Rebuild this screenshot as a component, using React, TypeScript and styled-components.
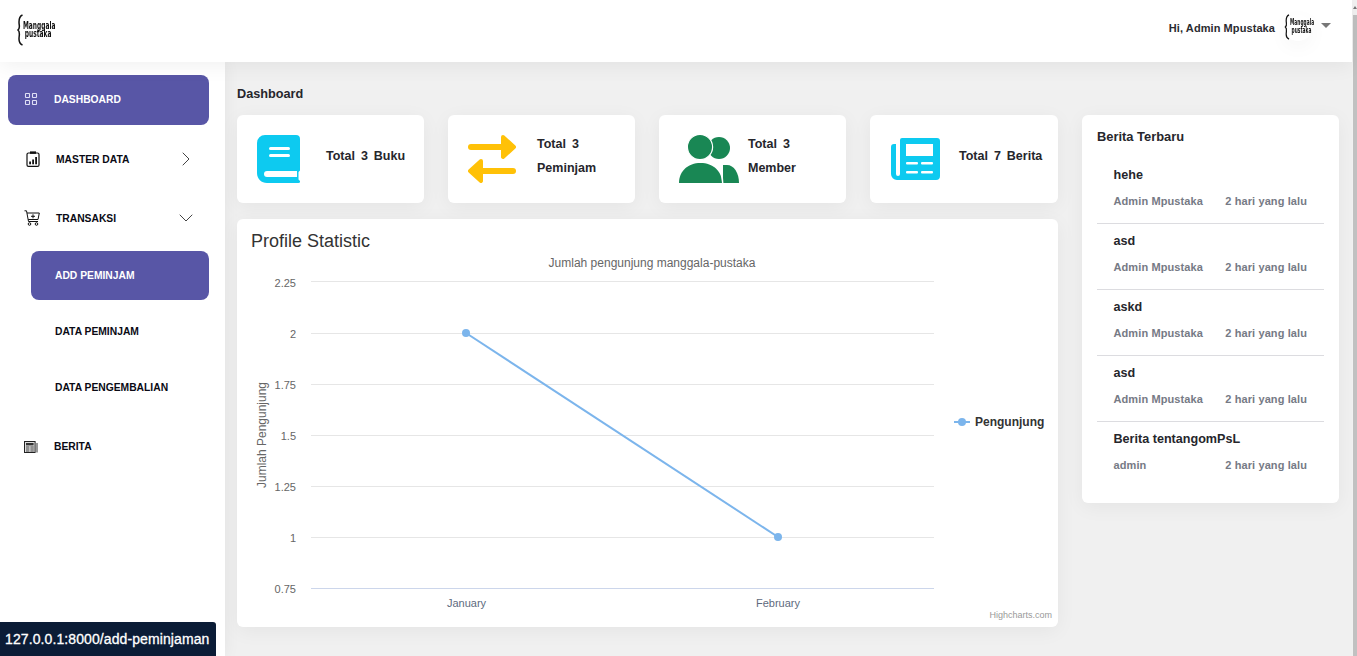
import React from 'react';
import styled, { createGlobalStyle } from 'styled-components';
import { ChevronDown, ChevronRight } from 'lucide-react';

const GlobalStyle = createGlobalStyle`
  html, body {
    margin: 0;
    height: 100%;
    overflow: hidden;
    font-family: 'Liberation Sans', Arial, sans-serif;
    background: #f0f0f0;
  }
`;

const Viewport = styled.div`
  width: 1357px;
  height: 656px;
  display: flex;
  overflow: hidden;
`;

const Page = styled.div`
  width: 1352px;
  display: flex;
  flex-direction: column;
`;

const Scrollbar = styled.div`
  width: 5px;
  background: #f1f1f1;
  padding: 15px 0 0 1px;
  box-sizing: border-box;
  display: flex;
  position: relative;

  &::before {
    content: '';
    flex: 1;
    background: #c1c1c1;
  }

  &::after {
    content: '';
    position: absolute;
    top: 6px;
    left: 1px;
    border-left: 2px solid transparent;
    border-right: 2px solid transparent;
    border-bottom: 3px solid #777;
  }
`;

const Header = styled.header`
  height: 62px;
  flex: none;
  background: #fff;
  box-shadow: 0 4px 20px rgba(0, 0, 0, 0.06);
  display: flex;
  align-items: center;
  justify-content: space-between;
  padding: 0 21px 0 17px;
  position: relative;
  z-index: 2;
`;

const LogoWrap = styled.div<{ $small?: boolean }>`
  display: flex;
  align-items: center;
  height: ${({ $small }) => ($small ? 26 : 32)}px;
  color: #111;
  transform: translateY(-1px);
  ${({ $small }) => $small && 'filter: blur(0.6px);'}
`;

const LogoText = styled.div<{ $small?: boolean }>`
  font-family: 'DejaVu Sans', sans-serif;
  font-size: ${({ $small }) => ($small ? 8 : 10)}px;
  line-height: ${({ $small }) => ($small ? 8 : 8.5)}px;
  font-weight: 700;
  transform: scaleX(${({ $small }) => ($small ? 0.54 : 0.59)});
  transform-origin: left center;
  width: ${({ $small }) => ($small ? 22 : 31)}px;
  white-space: nowrap;

  span {
    display: block;
    margin-left: 3px;
  }
`;

const UserArea = styled.div`
  display: flex;
  align-items: center;
  font-size: 11px;
  font-weight: 700;
  letter-spacing: 0.08px;
  color: #2b2b30;
  transform: translateY(-3px);
`;

const UserName = styled.span`
  margin-right: 9px;
`;

const Avatar = styled.span`
  display: flex;
  border-radius: 50%;
  background: #fff;
  box-shadow: 0 6px 20px rgba(0, 0, 0, 0.04);
`;

const Caret = styled.span`
  width: 0;
  height: 0;
  margin-left: 9px;
  margin-top: -5px;
  border-left: 5.5px solid transparent;
  border-right: 5.5px solid transparent;
  border-top: 5px solid #777;
`;

const Body = styled.div`
  flex: 1;
  min-height: 0;
  display: flex;
`;

const Sidebar = styled.aside`
  width: 225px;
  flex: none;
  background: #fff;
  padding: 13px 16px 0 8px;
  box-sizing: border-box;
  display: flex;
  flex-direction: column;
  box-shadow: 0 0 16px rgba(0, 0, 0, 0.06);
  position: relative;
  z-index: 1;
`;

const NavItem = styled.div<{ $active?: boolean; $height: number; $indent: number; $lift?: boolean }>`
  height: ${({ $height }) => $height}px;
  flex: none;
  display: flex;
  align-items: center;
  padding-left: ${({ $indent }) => $indent}px;
  padding-right: 11px;
  padding-bottom: ${({ $lift }) => ($lift ? 2 : 0)}px;
  font-size: 10.3px;
  font-weight: 700;
  color: ${({ $active }) => ($active ? '#fff' : '#0a0a14')};
  background: ${({ $active }) => ($active ? '#5856a6' : 'transparent')};
  border-radius: 8px;
  box-sizing: border-box;
`;

const NavIcon = styled.span<{ $width: number }>`
  width: ${({ $width }) => $width}px;
  flex: none;
  display: flex;
  align-items: center;
`;

const NavLabel = styled.span`
  flex: 1;
`;

const SubNav = styled.div`
  margin: 8px 0 0 23px;
  display: flex;
  flex-direction: column;
`;

const Main = styled.main`
  flex: 1;
  min-width: 0;
  padding: 24px 13px 0 12px;
  display: flex;
  flex-direction: column;
`;

const PageTitle = styled.h1`
  margin: 0 0 13px;
  font-size: 12.7px;
  line-height: 16px;
  font-weight: 700;
  color: #26262c;
`;

const Columns = styled.div`
  display: flex;
  gap: 24px;
  align-items: flex-start;
`;

const LeftColumn = styled.div`
  width: 821px;
  display: flex;
  flex-direction: column;
  gap: 16px;
`;

const StatRow = styled.div`
  display: grid;
  grid-template-columns: 187px 187px 187px 188px;
  gap: 24px;
`;

const Card = styled.div`
  background: #fff;
  border-radius: 6px;
  box-shadow: 0 4px 20px rgba(0, 0, 0, 0.05);
`;

const StatCard = styled(Card)`
  height: 88px;
  display: grid;
  grid-template-columns: 89px 1fr;
  align-items: center;
`;

const StatIcon = styled.div<{ $left: number }>`
  padding-left: ${({ $left }) => $left}px;
  display: flex;
  align-items: center;
`;

const StatText = styled.div`
  font-size: 12.5px;
  line-height: 24px;
  font-weight: 700;
  word-spacing: 2.5px;
  color: #26262c;
  white-space: nowrap;
  padding-bottom: 6px;
`;

const ChartCard = styled(Card)`
  height: 408px;
  position: relative;
`;

const ChartTitle = styled.div`
  position: absolute;
  left: 14px;
  top: 11px;
  font-size: 18px;
  line-height: 22px;
  color: #333;
`;

const ChartSvg = styled.svg`
  display: block;
  font-family: 'Liberation Sans', Arial, sans-serif;
`;

const NewsCard = styled(Card)`
  width: 257px;
  height: 388px;
  padding: 13px 15px 0;
  box-sizing: border-box;
`;

const NewsTitle = styled.div`
  font-size: 12.9px;
  line-height: 17px;
  font-weight: 700;
  color: #26262c;
  margin-bottom: 13px;
`;

const NewsItem = styled.div<{ $last?: boolean }>`
  height: 66px;
  box-sizing: border-box;
  padding: 9px 17px 0 16.500px;
  border-bottom: ${({ $last }) => ($last ? 'none' : '1px solid #dcdce0')};
`;

const NewsHead = styled.div`
  font-size: 12.6px;
  line-height: 17px;
  font-weight: 700;
  color: #26262c;
  margin-bottom: 10px;
`;

const NewsMeta = styled.div`
  display: flex;
  justify-content: space-between;
  font-size: 11px;
  line-height: 14px;
  font-weight: 700;
  letter-spacing: 0.1px;
  color: #767a85;
`;

const StatusBar = styled.div`
  position: fixed;
  left: 0;
  bottom: 0;
  width: 216px;
  height: 34px;
  box-sizing: border-box;
  padding-left: 5px;
  display: flex;
  align-items: center;
  background: #0b1c36;
  border-top-right-radius: 3px;
  color: #fff;
  font-size: 14px;
  letter-spacing: 0.1px;
  -webkit-text-stroke: 0.3px #fff;
  white-space: nowrap;
  z-index: 5;
`;

const Logo = ({ small }: { small?: boolean }) => (
  <LogoWrap $small={small}>
    <svg width="6" height={small ? 26 : 32} viewBox="0 0 6 32" fill="none" stroke="#111" strokeWidth="1.500">
      <path d="M5.500 1C3 2 2 4 2 8c0 4 1.500 6-1 8 2.500 2 1 5 1 9 0 3 1 5 3.500 6" />
    </svg>
    <LogoText $small={small}>
      Manggala
      <span>pustaka</span>
    </LogoText>
  </LogoWrap>
);

const GridIcon = () => (
  <svg width="14" height="14" viewBox="0 0 14 14" fill="none" stroke="#dfe0f5" strokeWidth="1.100">
    <rect x="1.500" y="1.500" width="4" height="4" rx="0.500" />
    <rect x="8.500" y="1.500" width="4" height="4" rx="0.500" />
    <rect x="1.500" y="8.500" width="4" height="4" rx="0.500" />
    <rect x="8.500" y="8.500" width="4" height="4" rx="0.500" />
  </svg>
);

const ClipboardIcon = () => (
  <svg width="14" height="16" viewBox="0 0 14 16" fill="none">
    <rect x="1" y="2" width="12" height="13.400" rx="1.500" stroke="#111" strokeWidth="1.200" />
    <rect x="4" y="0.400" width="6" height="2.400" fill="#111" />
    <rect x="3.200" y="10.500" width="1.800" height="2.800" fill="#111" />
    <rect x="6.200" y="8.500" width="1.800" height="4.800" fill="#111" />
    <rect x="9.200" y="6" width="1.800" height="7.300" fill="#111" />
  </svg>
);

const CartIcon = () => (
  <svg width="16" height="16" viewBox="0 0 16 16" fill="none" stroke="#111" strokeWidth="1">
    <path d="M0.500 0.800H2.500L4.500 11.500H14" />
    <path d="M3 3H15.300L14 9.500H4.200" />
    <path d="M9 4.300V8.300M7 6.300H11" />
    <circle cx="5.500" cy="14" r="1.300" />
    <circle cx="12.500" cy="14" r="1.300" />
  </svg>
);

const NewsSmallIcon = () => (
  <svg width="14" height="12" viewBox="0 0 14 12">
    <rect x="0.500" y="0.500" width="10.600" height="11" fill="#ddd" stroke="#222" />
    <rect x="2" y="2" width="7.600" height="2.400" fill="#333" />
    <path d="M2 6h3.400M2 8h3.400M2 10h3.400M6.400 6h3.400M6.400 8h3.400M6.400 10h3.400" stroke="#444" />
    <path d="M13 2v9.500" stroke="#333" />
  </svg>
);

const BookIcon = () => (
  <svg width="43" height="48" viewBox="0 0 43 48">
    <path
      d="M8 0h31a4 4 0 0 1 4 4v31.500l-1.500 1.500V44.500l1.500 1.500c.4 1-.2 2-1.600 2H10C4.500 48 0 44 0 38V8a8 8 0 0 1 8-8z"
      fill="#0dcaf0"
    />
    <path d="M10 36h30v6H10a3 3 0 0 1 0-6z" fill="#fff" />
    <rect x="12" y="12" width="21" height="3" rx="1.500" fill="#fff" />
    <rect x="12" y="19" width="21" height="3" rx="1.500" fill="#fff" />
  </svg>
);

const SwapIcon = () => (
  <svg width="48" height="48" viewBox="0 0 48 48" fill="#ffc107" stroke="#ffc107" strokeLinejoin="round" strokeLinecap="round">
    <path d="M3 12H36" fill="none" strokeWidth="6" />
    <polygon points="35,2 46,12 35,22" strokeWidth="4" />
    <path d="M12 36H45" fill="none" strokeWidth="6" />
    <polygon points="13,26 2,36 13,46" strokeWidth="4" />
  </svg>
);

const PeopleIcon = () => (
  <svg width="60" height="48" viewBox="0 0 60 48" fill="#198754">
    <circle cx="40" cy="13" r="11" />
    <path d="M44 30h4c7 0 12 8 12 18H44z" />
    <circle cx="21" cy="12" r="12.600" stroke="#fff" strokeWidth="1.200" />
    <path d="M0 48C0 36 9 28 21.500 28S43 36 43 48z" />
    <path d="M43.700 48C43.700 40 41 33 37 29" fill="none" stroke="#fff" strokeWidth="1.400" />
  </svg>
);

const PaperIcon = () => (
  <svg width="49" height="42" viewBox="0 0 49 42">
    <path d="M11 0h35a3 3 0 0 1 3 3v35a4 4 0 0 1-4 4H6a6 6 0 0 1-6-6V9a3 3 0 0 1 3-3h2v30a2 2 0 0 0 4 0V2a2 2 0 0 1 2-2z" fill="#0dcaf0" />
    <rect x="15" y="6" width="27" height="12" fill="#fff" />
    <rect x="15" y="24" width="12" height="2.500" rx="1" fill="#fff" />
    <rect x="30" y="24" width="12" height="2.500" rx="1" fill="#fff" />
    <rect x="15" y="33" width="12" height="2.500" rx="1" fill="#fff" />
    <rect x="30" y="33" width="12" height="2.500" rx="1" fill="#fff" />
  </svg>
);

const CHART_LEFT = 74;
const CHART_RIGHT = 697;
const ticks = [
  { label: '2.25', y: 62.5, textY: 68 },
  { label: '2', y: 114.5, textY: 119 },
  { label: '1.75', y: 165.5, textY: 170 },
  { label: '1.5', y: 216.5, textY: 221 },
  { label: '1.25', y: 267.5, textY: 272 },
  { label: '1', y: 318.5, textY: 323 },
];

const LineChart = () => (
  <ChartSvg width="821" height="408" viewBox="0 0 821 408">
    <text x="415" y="48" fontSize="12" fill="#666" textAnchor="middle">
      Jumlah pengunjung manggala-pustaka
    </text>
    {ticks.map((t) => (
      <g key={t.label}>
        <line x1={CHART_LEFT} x2={CHART_RIGHT} y1={t.y} y2={t.y} stroke="#e6e6e6" />
        <text x="59" y={t.textY} fontSize="11" fill="#666" textAnchor="end">
          {t.label}
        </text>
      </g>
    ))}
    <line x1={CHART_LEFT} x2={CHART_RIGHT} y1="369.500" y2="369.500" stroke="#ccd6eb" />
    <text x="59" y="374" fontSize="11" fill="#666" textAnchor="end">
      0.75
    </text>
    <text x="229.500" y="388" fontSize="11" fill="#5e6a7d" textAnchor="middle">
      January
    </text>
    <text x="541" y="388" fontSize="11" fill="#5e6a7d" textAnchor="middle">
      February
    </text>
    <text x="0" y="0" fontSize="12" fill="#666" textAnchor="middle" transform="translate(29 216) rotate(-90)">
      Jumlah Pengunjung
    </text>
    <path d="M229 114L541 318" stroke="#7cb5ec" strokeWidth="2" fill="none" />
    <circle cx="229" cy="114" r="4" fill="#7cb5ec" />
    <circle cx="541" cy="318" r="4" fill="#7cb5ec" />
    <line x1="717" x2="733" y1="203" y2="203" stroke="#7cb5ec" strokeWidth="2" />
    <circle cx="725" cy="203" r="4" fill="#7cb5ec" />
    <text x="738" y="207" fontSize="12" fontWeight="700" fill="#333">
      Pengunjung
    </text>
    <text x="815" y="399" fontSize="9" fill="#999" textAnchor="end">
      Highcharts.com
    </text>
  </ChartSvg>
);

const news = [
  { title: 'hehe', author: 'Admin Mpustaka' },
  { title: 'asd', author: 'Admin Mpustaka' },
  { title: 'askd', author: 'Admin Mpustaka' },
  { title: 'asd', author: 'Admin Mpustaka' },
  { title: 'Berita tentangomPsL', author: 'admin' },
];

const App = (): JSX.Element => (
  <Viewport>
    <GlobalStyle />
    <Page>
      <Header>
        <Logo />
        <UserArea>
          <UserName>Hi, Admin Mpustaka</UserName>
          <Avatar>
            <Logo small />
          </Avatar>
          <Caret />
        </UserArea>
      </Header>
      <Body>
        <Sidebar>
          <NavItem $active $lift $height={50} $indent={16}>
            <NavIcon $width={30}>
              <GridIcon />
            </NavIcon>
            <NavLabel>DASHBOARD</NavLabel>
          </NavItem>
          <NavItem $height={68} $indent={18}>
            <NavIcon $width={30}>
              <ClipboardIcon />
            </NavIcon>
            <NavLabel>MASTER DATA</NavLabel>
            <ChevronRight size={24} strokeWidth={1} color="#444" />
          </NavItem>
          <NavItem $height={50} $indent={16}>
            <NavIcon $width={32}>
              <CartIcon />
            </NavIcon>
            <NavLabel>TRANSAKSI</NavLabel>
            <ChevronDown size={24} strokeWidth={1} color="#444" />
          </NavItem>
          <SubNav>
            <NavItem $active $height={49} $indent={24}>
              <NavLabel>ADD PEMINJAM</NavLabel>
            </NavItem>
            <NavItem $height={63} $indent={24}>
              <NavLabel>DATA PEMINJAM</NavLabel>
            </NavItem>
            <NavItem $height={49} $indent={24}>
              <NavLabel>DATA PENGEMBALIAN</NavLabel>
            </NavItem>
          </SubNav>
          <NavItem $height={69} $indent={16}>
            <NavIcon $width={30}>
              <NewsSmallIcon />
            </NavIcon>
            <NavLabel>BERITA</NavLabel>
          </NavItem>
        </Sidebar>
        <Main>
          <PageTitle>Dashboard</PageTitle>
          <Columns>
            <LeftColumn>
              <StatRow>
                <StatCard>
                  <StatIcon $left={20}>
                    <BookIcon />
                  </StatIcon>
                  <StatText>Total 3 Buku</StatText>
                </StatCard>
                <StatCard>
                  <StatIcon $left={20}>
                    <SwapIcon />
                  </StatIcon>
                  <StatText>
                    Total 3
                    <br />
                    Peminjam
                  </StatText>
                </StatCard>
                <StatCard>
                  <StatIcon $left={20}>
                    <PeopleIcon />
                  </StatIcon>
                  <StatText>
                    Total 3
                    <br />
                    Member
                  </StatText>
                </StatCard>
                <StatCard>
                  <StatIcon $left={21}>
                    <PaperIcon />
                  </StatIcon>
                  <StatText>Total 7 Berita</StatText>
                </StatCard>
              </StatRow>
              <ChartCard>
                <ChartTitle>Profile Statistic</ChartTitle>
                <LineChart />
              </ChartCard>
            </LeftColumn>
            <NewsCard>
              <NewsTitle>Berita Terbaru</NewsTitle>
              {news.map((n, i) => (
                <NewsItem key={i} $last={i === news.length - 1}>
                  <NewsHead>{n.title}</NewsHead>
                  <NewsMeta>
                    <span>{n.author}</span>
                    <span>2 hari yang lalu</span>
                  </NewsMeta>
                </NewsItem>
              ))}
            </NewsCard>
          </Columns>
        </Main>
      </Body>
    </Page>
    <Scrollbar />
    <StatusBar>
      <span>127.0.0.1:8000/add-peminjaman</span>
    </StatusBar>
  </Viewport>
);

export default App;
